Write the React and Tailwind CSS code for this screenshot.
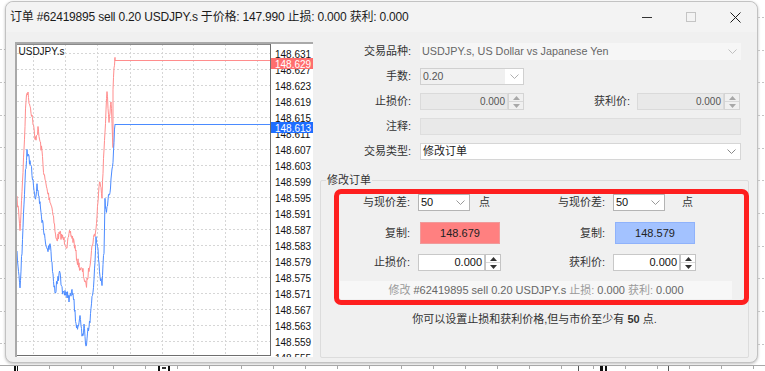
import React from 'react'

const FONT = "font-['Liberation_Sans','Noto_Sans_CJK_SC',sans-serif]"

// key points of the tick chart, page coordinates
const ASK = [
  [17, 200], [19, 215], [20, 232], [22, 190], [24, 150], [26, 100], [27, 90], [29, 100], [31, 110],
  [33, 122], [35, 140], [38, 130], [40, 142], [42, 152], [44, 175], [47, 190], [50, 200], [53, 212],
  [56, 240], [60, 234], [64, 240], [67, 246], [70, 232], [74, 242], [77, 260], [80, 268], [83, 272],
  [86, 287], [88, 275], [90, 262], [93, 240], [96, 230], [98, 200], [100, 178], [102, 195], [104, 150],
  [106, 110], [107, 92], [109, 122], [111, 100], [113, 150], [113, 88], [114, 70], [115, 58], [115, 61],
]
const BID = [
  [17, 255], [19, 272], [20, 287], [22, 250], [23, 225], [25, 180], [27, 150], [29, 160], [31, 166],
  [33, 180], [35, 200], [37, 186], [39, 196], [41, 212], [43, 226], [45, 240], [48, 250], [50, 244],
  [52, 262], [55, 295], [57, 282], [60, 272], [62, 290], [66, 292], [69, 298], [72, 290], [74, 302],
  [76, 325], [78, 330], [80, 318], [82, 336], [84, 328], [86, 345], [88, 330], [90, 320], [92, 300],
  [94, 282], [96, 240], [98, 252], [100, 276], [102, 284], [104, 250], [105, 200], [106, 212], [108, 200],
  [110, 190], [112, 172], [113, 160], [114, 140], [115, 126], [115, 124],
]

function jagged(keys, seed, amp) {
  let s = seed
  const rnd = () => {
    s = (s * 16807) % 2147483647
    return s / 2147483647 - 0.5
  }
  const pts = []
  for (let i = 0; i < keys.length - 1; i++) {
    const [x0, y0] = keys[i]
    const [x1, y1] = keys[i + 1]
    const steps = Math.max(1, Math.round((x1 - x0) * 2))
    for (let k = 0; k < steps; k++) {
      const t = k / steps
      pts.push([x0 + (x1 - x0) * t - 17, y0 + (y1 - y0) * t + rnd() * amp - 44])
    }
  }
  const [lx, ly] = keys[keys.length - 1]
  pts.push([lx - 17, ly - 44])
  return pts.map((p) => p[0].toFixed(1) + ',' + p[1].toFixed(1)).join(' ')
}

const LABELS = Array.from({ length: 20 }, (_, k) => (148.631 - k * 0.004).toFixed(3))

function Chart() {
  return (
    <div className="w-[298px] h-[315px] bg-white border-t-2 border-l-2 border-[#a9a9a9] overflow-hidden shrink-0">
      <svg width="296" height="313" className="block">
        {Array.from({ length: 20 }, (_, k) => (
          <line key={'h' + k} x1="0" x2="253" y1={9.5 + 16 * k} y2={9.5 + 16 * k} stroke="#d6d6d6" strokeDasharray="2 2" />
        ))}
        {[16, 48, 80, 113, 145, 176, 208, 240].map((x) => (
          <line key={'v' + x} x1={x + 0.5} x2={x + 0.5} y1="0" y2="311" stroke="#d6d6d6" strokeDasharray="2 2" />
        ))}
        <polyline points={jagged(ASK, 7, 8)} fill="none" stroke="#ff8d8d" strokeWidth="1" />
        <polyline points={jagged(BID, 13, 8)} fill="none" stroke="#4b8bff" strokeWidth="1" />
        <line x1="98" x2="253" y1="16.5" y2="16.5" stroke="#ff8d8d" />
        <line x1="98" x2="253" y1="80.5" y2="80.5" stroke="#4b8bff" />
        <line x1="0" x2="253" y1="0.5" y2="0.5" stroke="#8a8a8a" />
        <line x1="253.5" x2="253.5" y1="0" y2="312" stroke="#6e6e6e" />
        <line x1="0" x2="253" y1="311.5" y2="311.5" stroke="#6e6e6e" />
        <text x="1.5" y="11" fontSize="10" fill="#111" fontFamily="Liberation Sans, sans-serif">USDJPY.s</text>
        {LABELS.map((v, k) => (
          <text key={v} x="258" y={13.5 + 16 * k} fontSize="10" fill="#111" fontFamily="Liberation Sans, sans-serif">
            {v}
          </text>
        ))}
        <rect x="254" y="14" width="42" height="11" fill="#ff6e6e" />
        <text x="258" y="23.5" fontSize="10" fill="#fff" fontFamily="Liberation Sans, sans-serif">148.629</text>
        <rect x="254" y="78" width="42" height="11" fill="#1d6dff" />
        <text x="258" y="87.5" fontSize="10" fill="#fff" fontFamily="Liberation Sans, sans-serif">148.613</text>
      </svg>
    </div>
  )
}

function Chevron({ color = '#a0a0a0' }) {
  return (
    <svg width="9" height="5" viewBox="0 0 9 5" className="block">
      <polyline points="0.5,0.5 4.5,4.5 8.5,0.5" fill="none" stroke={color} strokeWidth="1" />
    </svg>
  )
}

function Spinner({ dark }) {
  const c = dark ? '#333' : '#a8a8a8'
  return (
    <div className={`w-[16px] h-full flex flex-col border ${dark ? 'border-[#c4c4c4] bg-white' : 'border-[#d4d4d4] bg-[#f0f0f0]'}`}>
      <div className="flex-1 flex items-center justify-center border-b border-[#d8d8d8]">
        <svg width="7" height="4" className="block"><polygon points="0,4 3.5,0 7,4" fill={c} /></svg>
      </div>
      <div className="flex-1 flex items-center justify-center">
        <svg width="7" height="4" className="block"><polygon points="0,0 3.5,4 7,0" fill={c} /></svg>
      </div>
    </div>
  )
}

function Label({ children, w = 'w-[91px]' }) {
  return <div className={`${w} text-right text-[11px] text-[#333] leading-none shrink-0`}>{children}</div>
}

function FormTop() {
  return (
    <div className="flex flex-col gap-[8px] pt-[1px] text-[10px]">
      <div className="flex items-center h-[17px]">
        <Label>交易品种:</Label>
        <div className="ml-[9px] w-[321px] h-full bg-[#f6f6f6] flex items-center justify-between pl-[2px] pr-[4px] text-[10.8px] text-[#666]">
          <span>USDJPY.s, US Dollar vs Japanese Yen</span>
          <Chevron color="#c0c0c0" />
        </div>
      </div>
      <div className="flex items-center h-[17px]">
        <Label>手数:</Label>
        <div className="ml-[9px] w-[104px] h-full border border-[#d0d0d0] bg-[#f0f0f0] flex items-center">
          <span className="flex-1 pl-[2px] text-[10.5px] text-[#555]">0.20</span>
          <div className="w-[18px] h-full bg-white flex items-center justify-center">
            <Chevron color="#b0b0b0" />
          </div>
        </div>
      </div>
      <div className="flex items-center h-[17px]">
        <Label>止损价:</Label>
        <div className="ml-[9px] w-[88px] h-full border border-[#dadada] bg-[#e9e9e9] flex items-center justify-end pr-[2px] text-[#555]">0.000</div>
        <Spinner />
        <Label w="w-[60px] ml-[46px]">获利价:</Label>
        <div className="ml-[7px] w-[87px] h-full border border-[#dadada] bg-[#e9e9e9] flex items-center justify-end pr-[2px] text-[#555]">0.000</div>
        <Spinner />
      </div>
      <div className="flex items-center h-[17px]">
        <Label>注释:</Label>
        <div className="ml-[9px] w-[321px] h-full border border-[#dedede] bg-[#e9e9e9]" />
      </div>
      <div className="flex items-center h-[17px]">
        <Label>交易类型:</Label>
        <div className="ml-[9px] w-[321px] h-full border border-[#d6d6d6] bg-white flex items-center justify-between pl-[2px] pr-[4px] text-[11px] text-[#222]">
          <span>修改订单</span>
          <Chevron color="#888" />
        </div>
      </div>
    </div>
  )
}

function Select({ w }) {
  return (
    <div className={`${w} h-[17px] border border-[#b4b4b4] bg-white flex items-center justify-between pl-[2px] pr-[4px] text-[11px] text-[#111]`}>
      <span>50</span>
      <Chevron color="#999" />
    </div>
  )
}

function PriceInput() {
  return (
    <div className="flex h-[17px] ml-[8px]">
      <div className="w-[67px] h-full border border-[#c8c8c8] bg-white flex items-center justify-end pr-[2px] text-[11px] text-[#111]">0.000</div>
      <Spinner dark />
    </div>
  )
}

function ModifyGroup() {
  return (
    <fieldset className="mt-[13px] w-[429px] h-[185px] border border-[#dcdcdc] rounded-[2px]">
      <legend className="ml-[5px] px-[1px] text-[11px] text-[#333] leading-[15px]">修改订单</legend>
      <div className="ml-[13px] mr-[-1px] mt-[1px] border-[5px] border-[#fe1f1f] rounded-[7px] h-[116px] flex flex-col">
        <div className="flex items-center h-[17px]">
          <div className="w-[195px] flex items-center">
            <Label w="w-[71px]">与现价差:</Label>
            <div className="ml-[8px]"><Select w="w-[52px]" /></div>
            <span className="ml-[9px] text-[11px] text-[#333]">点</span>
          </div>
          <div className="flex items-center">
            <Label w="w-[71px]">与现价差:</Label>
            <div className="ml-[8px]"><Select w="w-[52px]" /></div>
            <span className="ml-[17px] text-[11px] text-[#333]">点</span>
          </div>
        </div>
        <div className="flex items-center h-[22px] mt-[11px] text-[11px]">
          <div className="w-[195px] flex items-center">
            <Label w="w-[71px]">复制:</Label>
            <div className="ml-[10px] w-[80px] h-[22px] bg-[#ff8080] border border-[#f09a9a] flex items-center justify-center text-[#222]">148.679</div>
          </div>
          <div className="flex items-center">
            <Label w="w-[71px]">复制:</Label>
            <div className="ml-[10px] w-[80px] h-[22px] bg-[#a3c2ff] border border-[#8fb2fb] flex items-center justify-center text-[#222]">148.579</div>
          </div>
        </div>
        <div className="flex items-center h-[17px] mt-[10px]">
          <div className="w-[195px] flex items-center">
            <Label w="w-[71px]">止损价:</Label>
            <PriceInput />
          </div>
          <div className="flex items-center">
            <Label w="w-[71px]">获利价:</Label>
            <PriceInput />
          </div>
        </div>
        <div className="ml-[1px] mt-[10px] w-[392px] h-[18px] bg-[#f7f7f7] flex items-center justify-center text-[11px] text-[#9a9a9a] whitespace-pre">
          <span>修改 </span>
          <span className="text-[#666]">#62419895 sell 0.20 USDJPY.s </span>
          <span>止损: </span>
          <span className="text-[#666]">0.000 </span>
          <span>获利: </span>
          <span className="text-[#666]">0.000</span>
        </div>
      </div>
      <div className="mt-[6px] text-center text-[11px] text-[#333]">
        你可以设置止损和获利价格,但与市价至少有 <b className="font-bold">50</b> 点.
      </div>
    </fieldset>
  )
}

function SideStrip({ width, marks }) {
  return (
    <svg width={width} height="363" className="block shrink-0">
      {marks.map((y) => (
        <line key={y} x1="0" x2={width} y1={y + 0.5} y2={y + 0.5} stroke="#c4c4c4" strokeDasharray="2 2" />
      ))}
    </svg>
  )
}

function BottomStrip() {
  const ticks = Array.from({ length: 24 }, (_, k) => 17 + k * 32)
  return (
    <svg width="765" height="8" className="block">
      <line x1="0" x2="765" y1="2.5" y2="2.5" stroke="#a8a8a8" />
      {ticks.map((x) => (
        <line key={x} x1={x + 0.5} x2={x + 0.5} y1="3" y2="6" stroke="#a8a8a8" />
      ))}
      <rect x="14" y="3" width="2" height="5" fill="#111" />
      <rect x="17" y="3" width="1" height="5" fill="#111" />
      <rect x="158" y="3" width="2" height="5" fill="#111" />
      <rect x="162" y="4" width="4" height="2" fill="#333" />
      <rect x="168" y="3" width="2" height="5" fill="#111" />
      <rect x="578" y="3" width="1" height="5" fill="#555" />
      <rect x="600" y="3" width="3" height="5" fill="#111" />
      <rect x="605" y="3" width="2" height="5" fill="#111" />
      <rect x="668" y="3" width="1" height="5" fill="#555" />
    </svg>
  )
}

function TitleBar() {
  return (
    <div className="h-[30px] flex items-center bg-[#f3f3f3] rounded-t-[8px] shrink-0">
      <div className="pl-[4px] flex-1 text-[12px] text-[#1b1b1b] whitespace-nowrap tracking-[-0.2px]">
        订单 #62419895 sell 0.20 USDJPY.s 于价格: 147.990 止损: 0.000 获利: 0.000
      </div>
      <div className="w-[44px] h-full flex items-center justify-center">
        <div className="w-[10px] h-px bg-[#333]" />
      </div>
      <div className="w-[44px] h-full flex items-center justify-center">
        <div className="w-[10px] h-[10px] border border-[#c4c4c4]" />
      </div>
      <div className="w-[44px] h-full flex items-center justify-center">
        <svg width="11" height="11" className="block">
          <path d="M0.5 0.5 L10.5 10.5 M10.5 0.5 L0.5 10.5" stroke="#1b1b1b" strokeWidth="1" />
        </svg>
      </div>
    </div>
  )
}

export default function App() {
  return (
    <div className={`w-[765px] h-[371px] bg-white flex flex-col overflow-hidden ${FONT}`}>
      <div className="flex h-[363px]">
        <SideStrip width={5} marks={[49, 82, 115, 147, 180, 213, 245, 278, 311, 343]} />
        <div className="mt-[1px] w-[753px] h-[362px] flex flex-col rounded-[8px] border border-[#c2c2c2] bg-[#f0f0f0] shadow-[0_1px_3px_rgba(0,0,0,0.25)]">
          <TitleBar />
          <div className="flex pl-[9px] pt-[10px]">
            <Chart />
            <div className="ml-[7px] w-[429px] flex flex-col">
              <FormTop />
              <ModifyGroup />
            </div>
          </div>
        </div>
        <SideStrip width={7} marks={[17, 50, 82, 115, 148, 180, 213, 246, 278, 311, 344]} />
      </div>
      <BottomStrip />
    </div>
  )
}
